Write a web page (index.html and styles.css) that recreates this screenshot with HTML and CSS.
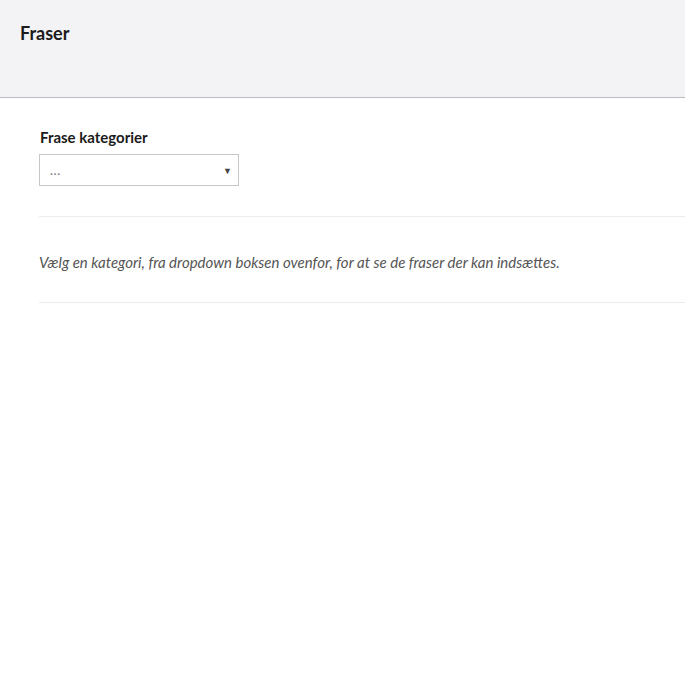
FILE: index.html
```html
<!DOCTYPE html>
<html lang="da">
<head>
<meta charset="utf-8">
<title>Fraser</title>
<link rel="stylesheet" href="styles.css">
</head>
<body>
<header class="topbar">
  <h1 class="title">Fraser</h1>
</header>
<main class="content">
  <div class="field">
    <label class="field-label">Frase kategorier</label>
    <div class="select">
      <span class="select-value">...</span>
      <span class="select-arrow">▼</span>
    </div>
  </div>
  <section class="notice">
    <p class="notice-text">Vælg en kategori, fra dropdown boksen ovenfor, for at se de fraser der kan indsættes.</p>
  </section>
</main>
</body>
</html>
```

FILE: styles.css
```css
* { box-sizing: border-box; }
html, body {
  margin: 0;
  padding: 0;
  background: #fff;
  font-family: Lato, "Open Sans", sans-serif;
  color: #1b1b1b;
}
.topbar {
  height: 98px;
  background: #f3f3f5;
  border-bottom: 1px solid #bcbcc2;
  padding: 21px 20px 0;
}
.title {
  margin: 0;
  font-size: 18px;
  font-weight: 700;
  line-height: 24px;
  color: #1b1b1b;
}
.content {
  padding: 29px 0 0 39px;
}
.field {
  padding-bottom: 30px;
  border-bottom: 1px solid #ececec;
}
.field-label {
  display: block;
  font-size: 15px;
  font-weight: 700;
  line-height: 20px;
  margin-bottom: 7px;
  padding-left: 1px;
  color: #1b1b1b;
}
.select {
  width: 200px;
  height: 32px;
  border: 1px solid #c6c6c6;
  display: flex;
  align-items: center;
  justify-content: space-between;
  padding: 0 6px 0 10px;
  font-size: 13px;
  color: #777;
}
.select-value {
  letter-spacing: 0.5px;
}
.select-arrow {
  font-size: 9px;
  color: #444;
}
.notice {
  border-bottom: 1px solid #ececec;
  height: 86px;
  display: flex;
  align-items: center;
  padding-top: 4px;
}
.notice-text {
  margin: 0;
  font-size: 15px;
  font-style: italic;
  color: #555;
  line-height: 20px;
}
```
